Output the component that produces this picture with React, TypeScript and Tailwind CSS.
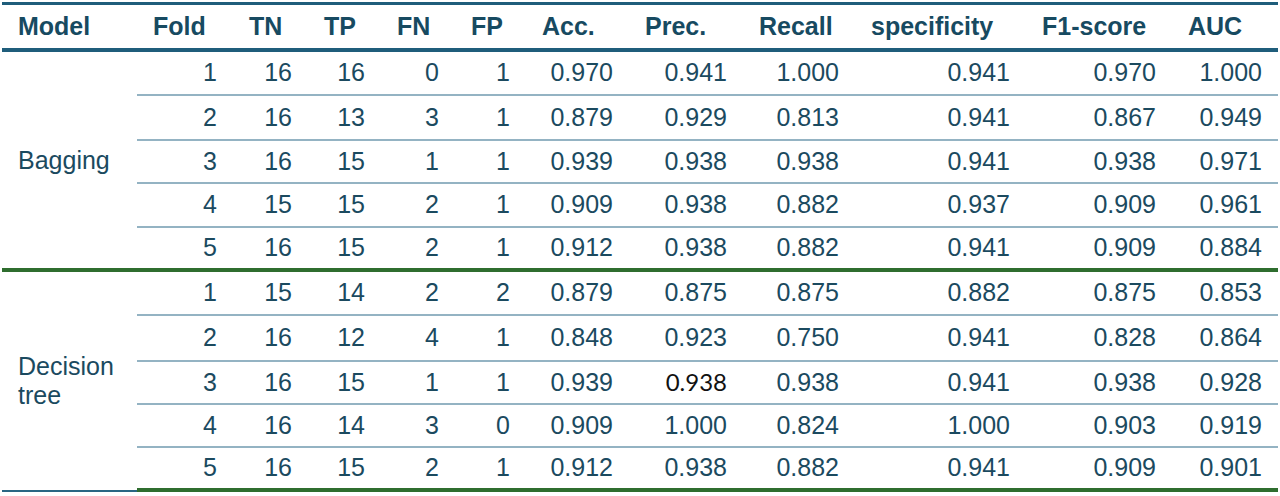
import React from 'react'

type Row = {
  fold: number
  tn: number
  tp: number
  fn: number
  fp: number
  acc: string
  prec: string
  recall: string
  spec: string
  f1: string
  auc: string
}

const groups: { model: string; heights: string[]; rows: Row[] }[] = [
  {
    model: 'Bagging',
    heights: ['h-[44px]', 'h-[45px]', 'h-[43px]', 'h-[44px]', 'h-[44px]'],
    rows: [
      { fold: 1, tn: 16, tp: 16, fn: 0, fp: 1, acc: '0.970', prec: '0.941', recall: '1.000', spec: '0.941', f1: '0.970', auc: '1.000' },
      { fold: 2, tn: 16, tp: 13, fn: 3, fp: 1, acc: '0.879', prec: '0.929', recall: '0.813', spec: '0.941', f1: '0.867', auc: '0.949' },
      { fold: 3, tn: 16, tp: 15, fn: 1, fp: 1, acc: '0.939', prec: '0.938', recall: '0.938', spec: '0.941', f1: '0.938', auc: '0.971' },
      { fold: 4, tn: 15, tp: 15, fn: 2, fp: 1, acc: '0.909', prec: '0.938', recall: '0.882', spec: '0.937', f1: '0.909', auc: '0.961' },
      { fold: 5, tn: 16, tp: 15, fn: 2, fp: 1, acc: '0.912', prec: '0.938', recall: '0.882', spec: '0.941', f1: '0.909', auc: '0.884' },
    ],
  },
  {
    model: 'Decision tree',
    heights: ['h-[44px]', 'h-[46px]', 'h-[43px]', 'h-[43px]', 'h-[44px]'],
    rows: [
      { fold: 1, tn: 15, tp: 14, fn: 2, fp: 2, acc: '0.879', prec: '0.875', recall: '0.875', spec: '0.882', f1: '0.875', auc: '0.853' },
      { fold: 2, tn: 16, tp: 12, fn: 4, fp: 1, acc: '0.848', prec: '0.923', recall: '0.750', spec: '0.941', f1: '0.828', auc: '0.864' },
      { fold: 3, tn: 16, tp: 15, fn: 1, fp: 1, acc: '0.939', prec: '0.938', recall: '0.938', spec: '0.941', f1: '0.938', auc: '0.928' },
      { fold: 4, tn: 16, tp: 14, fn: 3, fp: 0, acc: '0.909', prec: '1.000', recall: '0.824', spec: '1.000', f1: '0.903', auc: '0.919' },
      { fold: 5, tn: 16, tp: 15, fn: 2, fp: 1, acc: '0.912', prec: '0.938', recall: '0.882', spec: '0.941', f1: '0.909', auc: '0.901' },
    ],
  },
]

const headers = ['Model', 'Fold', 'TN', 'TP', 'FN', 'FP', 'Acc.', 'Prec.', 'Recall', 'specificity', 'F1-score', 'AUC']
const widths = ['w-[135px]', 'w-[96px]', 'w-[75px]', 'w-[73px]', 'w-[74px]', 'w-[71px]', 'w-[103px]', 'w-[114px]', 'w-[112px]', 'w-[171px]', 'w-[146px]', 'w-[106px]']

export default function App() {
  return (
    <div className="w-[1280px] h-[496px] bg-white pt-[2px] pl-[2px]" style={{ fontFamily: '"Liberation Sans", Arial, sans-serif' }}>
      <table className="w-[1276px] table-fixed border-separate border-spacing-0 text-[25px] text-[#1b4a5f]">
        <colgroup>
          {widths.map((w, i) => (
            <col key={i} className={w} />
          ))}
        </colgroup>
        <thead>
          <tr className="h-[50px]">
            {headers.map((h) => (
              <th
                key={h}
                className="border-t-[3px] border-b-4 border-[#1f5d7b] px-4 text-left align-middle font-bold text-[#174a61]"
              >
                {h}
              </th>
            ))}
          </tr>
        </thead>
        <tbody>
          {groups.map((g, gi) => {
            const lastGroup = gi === groups.length - 1
            return g.rows.map((r, ri) => {
              const lastRow = ri === g.rows.length - 1
              const line = lastRow
                ? 'border-b-4 border-[#2f6d2f]'
                : 'border-b-2 border-[#94b3c3]'
              const cell = `${line} px-4 text-right align-middle`
              // this one cell was pasted in another font in the original
              const oddOne = lastGroup && ri === 2
              return (
                <tr key={`${gi}-${ri}`} className={g.heights[ri]}>
                  {ri === 0 && (
                    <td
                      rowSpan={5}
                      className={`${lastGroup ? 'border-b-2 border-[#2a6683]' : 'border-b-4 border-[#2f6d2f]'} pl-4 pr-2 text-left align-middle leading-[29px]`}
                    >
                      {g.model}
                    </td>
                  )}
                  <td className={cell}>{r.fold}</td>
                  <td className={cell}>{r.tn}</td>
                  <td className={cell}>{r.tp}</td>
                  <td className={cell}>{r.fn}</td>
                  <td className={cell}>{r.fp}</td>
                  <td className={cell}>{r.acc}</td>
                  <td className={cell}>
                    {oddOne ? (
                      <span className="text-[24px] text-[#111]" style={{ fontFamily: 'Lato, "Open Sans", sans-serif' }}>
                        {r.prec}
                      </span>
                    ) : (
                      r.prec
                    )}
                  </td>
                  <td className={cell}>{r.recall}</td>
                  <td className={cell}>{r.spec}</td>
                  <td className={cell}>{r.f1}</td>
                  <td className={cell}>{r.auc}</td>
                </tr>
              )
            })
          })}
        </tbody>
      </table>
    </div>
  )
}
